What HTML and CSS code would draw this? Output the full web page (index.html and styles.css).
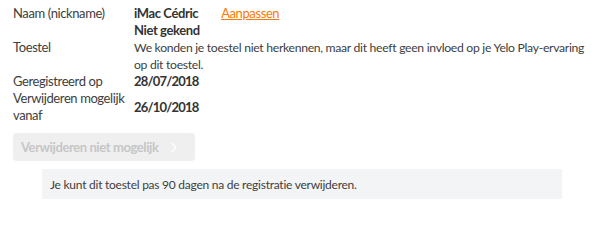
FILE: index.html
```html
<!DOCTYPE html>
<html>
<head>
<meta charset="utf-8">
<link rel="stylesheet" href="styles.css">
</head>
<body>
<div class="page">
  <table class="info">
    <tr>
      <td class="label">Naam (nickname)</td>
      <td class="value"><b>iMac Cédric</b><a class="edit" href="#">Aanpassen</a></td>
    </tr>
    <tr>
      <td class="label">Toestel</td>
      <td class="value"><b>Niet gekend</b><br>We konden je toestel niet herkennen, maar dit heeft geen invloed op je Yelo Play-ervaring op dit toestel.</td>
    </tr>
    <tr>
      <td class="label">Geregistreerd op</td>
      <td class="value"><b class="date">28/07/2018</b></td>
    </tr>
    <tr>
      <td class="label">Verwijderen mogelijk vanaf</td>
      <td class="value"><b class="date">26/10/2018</b></td>
    </tr>
  </table>
  <div class="btn">
    <span>Verwijderen niet mogelijk</span>
    <svg class="chev" width="6" height="11" viewBox="0 0 6 11"><path d="M0.8 0.8 L5 5.5 L0.8 10.2" fill="none" stroke="#fff" stroke-width="1.3"/></svg>
  </div>
  <div class="note">Je kunt dit toestel pas 90 dagen na de registratie verwijderen.</div>
</div>
</body>
</html>
```
FILE: styles.css
```css
html, body { margin: 0; padding: 0; background: #fff; }
body {
  font-family: Lato, "Noto Sans", sans-serif;
  font-size: 12.2px;
  line-height: 17px;
  letter-spacing: -0.3px;
  color: #404040;
}
.page { padding: 5px 0 0 13px; }
.info { border-collapse: collapse; }
.info td { padding: 0; vertical-align: middle; }
.label { width: 121px; font-size: 13px; letter-spacing: -0.4px; }
.value { width: 455px; }
.value b { font-weight: 700; color: #333; font-size: 13px; letter-spacing: -0.4px; }
.value b.date { letter-spacing: -0.8px; }
.edit {
  color: #ff7900;
  margin-left: 23px;
  font-size: 13px;
  letter-spacing: -0.4px;
  text-decoration: underline;
}
.btn {
  margin-top: 9px;
  width: 182px;
  height: 28px;
  box-sizing: border-box;
  padding: 0 0 0 8px;
  background: #efefef;
  border-radius: 4px;
  display: flex;
  align-items: center;
  font-size: 13px;
  letter-spacing: -0.4px;
  font-weight: 700;
  color: #c6c6c6;
}
.chev { margin-left: 12px; }
.note {
  margin: 8px 0 0 29px;
  width: 520px;
  height: 30px;
  box-sizing: border-box;
  padding-left: 8px;
  background: #f3f4f6;
  display: flex;
  align-items: center;
  font-size: 12px;
  letter-spacing: -0.25px;
}
```
